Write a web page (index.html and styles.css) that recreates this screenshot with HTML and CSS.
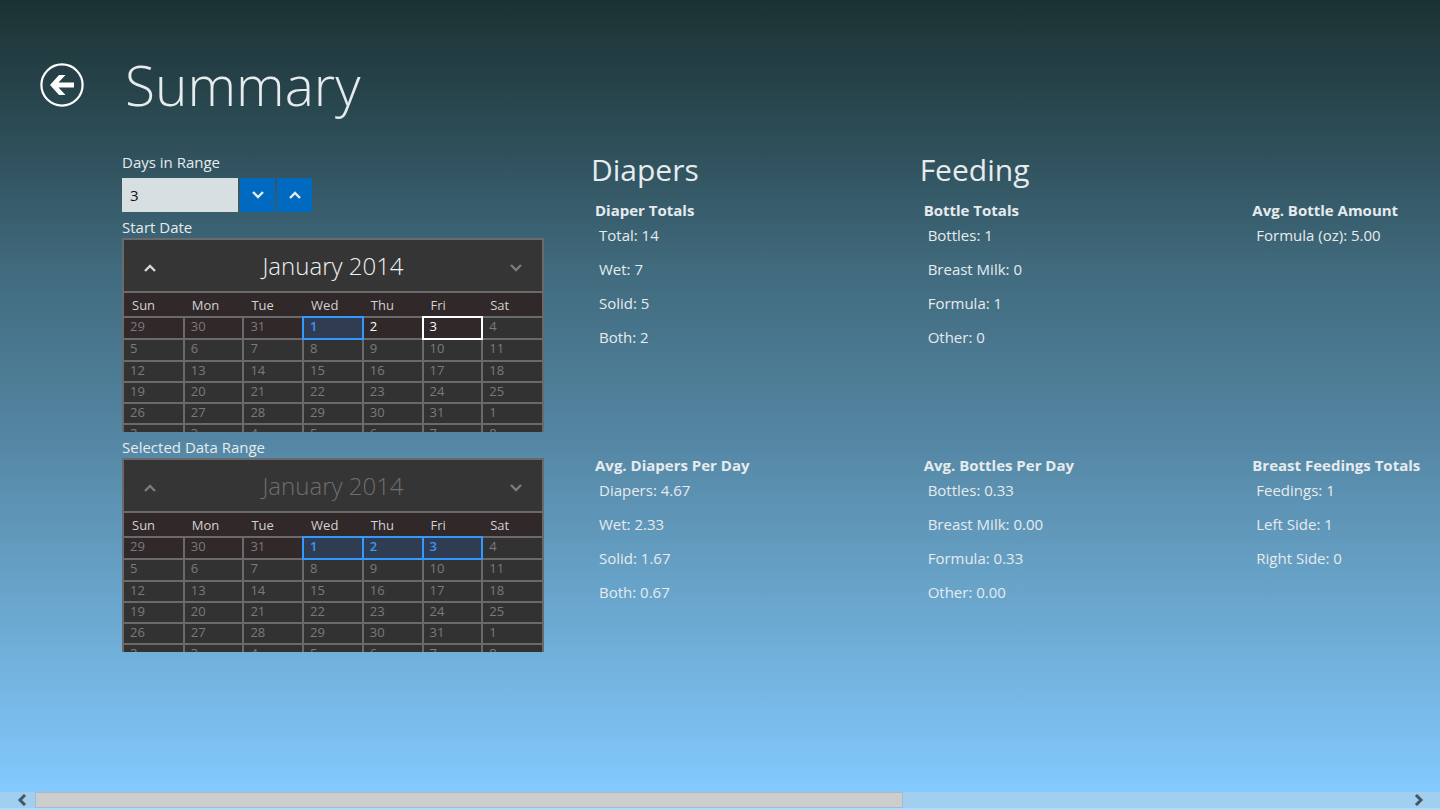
FILE: index.html
```
<!DOCTYPE html>
<html lang="en">
<head>
    <meta charset="UTF-8">
    <meta name="viewport" content="width=device-width, initial-scale=1.0">
    <title>Summary</title>
    <link rel="stylesheet" href="styles.css">
</head>
<body>
    <header class="page-header">
        <button class="back" type="button" aria-label="Back">
            <svg width="44" height="44" viewBox="0 0 44 44">
                <circle cx="22" cy="22" r="20.6" fill="none" stroke="#fff" stroke-width="2.2"/>
                <path d="M10 22 L19 12 H25.5 L18.5 19.4 H34 V24.6 H18.5 L25.5 32 H19 Z" fill="#fff"/>
            </svg>
        </button>
        <h1>Summary</h1>
    </header>

    <main class="content">
        <section class="filters">
            <label for="days">Days in Range</label>
            <div class="stepper">
                <input id="days" type="text" value="3">
                <button type="button" aria-label="Decrease">
                    <svg width="14" height="10" viewBox="0 0 14 10"><path d="M2 2 L7 7 L12 2"/></svg>
                </button>
                <button type="button" aria-label="Increase">
                    <svg width="14" height="10" viewBox="0 0 14 10"><path d="M2 8 L7 3 L12 8"/></svg>
                </button>
            </div>

            <h3 class="label">Start Date</h3>
            <div class="calendar">
                <div class="calendar-head">
                    <button type="button" aria-label="Previous month">
                        <svg width="14" height="10" viewBox="0 0 14 10"><path d="M2 8 L7 3 L12 8"/></svg>
                    </button>
                    <span class="month">January 2014</span>
                    <button type="button" aria-label="Next month" disabled>
                        <svg width="14" height="10" viewBox="0 0 14 10"><path d="M2 2 L7 7 L12 2"/></svg>
                    </button>
                </div>
                <table>
                    <thead>
                        <tr><th>Sun</th><th>Mon</th><th>Tue</th><th>Wed</th><th>Thu</th><th>Fri</th><th>Sat</th></tr>
                    </thead>
                    <tbody>
                        <tr>
                            <td class="past"><button type="button" disabled>29</button></td>
                            <td class="past"><button type="button" disabled>30</button></td>
                            <td class="past"><button type="button" disabled>31</button></td>
                            <td class="selected"><button type="button">1</button></td>
                            <td class="open"><button type="button">2</button></td>
                            <td class="open today"><button type="button">3</button></td>
                            <td><button type="button" disabled>4</button></td>
                        </tr>
                        <tr>
                            <td><button type="button" disabled>5</button></td>
                            <td><button type="button" disabled>6</button></td>
                            <td><button type="button" disabled>7</button></td>
                            <td><button type="button" disabled>8</button></td>
                            <td><button type="button" disabled>9</button></td>
                            <td><button type="button" disabled>10</button></td>
                            <td><button type="button" disabled>11</button></td>
                        </tr>
                        <tr>
                            <td><button type="button" disabled>12</button></td>
                            <td><button type="button" disabled>13</button></td>
                            <td><button type="button" disabled>14</button></td>
                            <td><button type="button" disabled>15</button></td>
                            <td><button type="button" disabled>16</button></td>
                            <td><button type="button" disabled>17</button></td>
                            <td><button type="button" disabled>18</button></td>
                        </tr>
                        <tr>
                            <td><button type="button" disabled>19</button></td>
                            <td><button type="button" disabled>20</button></td>
                            <td><button type="button" disabled>21</button></td>
                            <td><button type="button" disabled>22</button></td>
                            <td><button type="button" disabled>23</button></td>
                            <td><button type="button" disabled>24</button></td>
                            <td><button type="button" disabled>25</button></td>
                        </tr>
                        <tr>
                            <td><button type="button" disabled>26</button></td>
                            <td><button type="button" disabled>27</button></td>
                            <td><button type="button" disabled>28</button></td>
                            <td><button type="button" disabled>29</button></td>
                            <td><button type="button" disabled>30</button></td>
                            <td><button type="button" disabled>31</button></td>
                            <td><button type="button" disabled>1</button></td>
                        </tr>
                        <tr>
                            <td><button type="button" disabled>2</button></td>
                            <td><button type="button" disabled>3</button></td>
                            <td><button type="button" disabled>4</button></td>
                            <td><button type="button" disabled>5</button></td>
                            <td><button type="button" disabled>6</button></td>
                            <td><button type="button" disabled>7</button></td>
                            <td><button type="button" disabled>8</button></td>
                        </tr>
                    </tbody>
                </table>
            </div>

            <h3 class="label">Selected Data Range</h3>
            <div class="calendar readonly">
                <div class="calendar-head">
                    <button type="button" aria-label="Previous month" disabled>
                        <svg width="14" height="10" viewBox="0 0 14 10"><path d="M2 8 L7 3 L12 8"/></svg>
                    </button>
                    <span class="month">January 2014</span>
                    <button type="button" aria-label="Next month" disabled>
                        <svg width="14" height="10" viewBox="0 0 14 10"><path d="M2 2 L7 7 L12 2"/></svg>
                    </button>
                </div>
                <table>
                    <thead>
                        <tr><th>Sun</th><th>Mon</th><th>Tue</th><th>Wed</th><th>Thu</th><th>Fri</th><th>Sat</th></tr>
                    </thead>
                    <tbody>
                        <tr>
                            <td class="past"><button type="button" disabled>29</button></td>
                            <td class="past"><button type="button" disabled>30</button></td>
                            <td class="past"><button type="button" disabled>31</button></td>
                            <td class="selected"><button type="button">1</button></td>
                            <td class="selected"><button type="button">2</button></td>
                            <td class="selected"><button type="button">3</button></td>
                            <td><button type="button" disabled>4</button></td>
                        </tr>
                        <tr>
                            <td><button type="button" disabled>5</button></td>
                            <td><button type="button" disabled>6</button></td>
                            <td><button type="button" disabled>7</button></td>
                            <td><button type="button" disabled>8</button></td>
                            <td><button type="button" disabled>9</button></td>
                            <td><button type="button" disabled>10</button></td>
                            <td><button type="button" disabled>11</button></td>
                        </tr>
                        <tr>
                            <td><button type="button" disabled>12</button></td>
                            <td><button type="button" disabled>13</button></td>
                            <td><button type="button" disabled>14</button></td>
                            <td><button type="button" disabled>15</button></td>
                            <td><button type="button" disabled>16</button></td>
                            <td><button type="button" disabled>17</button></td>
                            <td><button type="button" disabled>18</button></td>
                        </tr>
                        <tr>
                            <td><button type="button" disabled>19</button></td>
                            <td><button type="button" disabled>20</button></td>
                            <td><button type="button" disabled>21</button></td>
                            <td><button type="button" disabled>22</button></td>
                            <td><button type="button" disabled>23</button></td>
                            <td><button type="button" disabled>24</button></td>
                            <td><button type="button" disabled>25</button></td>
                        </tr>
                        <tr>
                            <td><button type="button" disabled>26</button></td>
                            <td><button type="button" disabled>27</button></td>
                            <td><button type="button" disabled>28</button></td>
                            <td><button type="button" disabled>29</button></td>
                            <td><button type="button" disabled>30</button></td>
                            <td><button type="button" disabled>31</button></td>
                            <td><button type="button" disabled>1</button></td>
                        </tr>
                        <tr>
                            <td><button type="button" disabled>2</button></td>
                            <td><button type="button" disabled>3</button></td>
                            <td><button type="button" disabled>4</button></td>
                            <td><button type="button" disabled>5</button></td>
                            <td><button type="button" disabled>6</button></td>
                            <td><button type="button" disabled>7</button></td>
                            <td><button type="button" disabled>8</button></td>
                        </tr>
                    </tbody>
                </table>
            </div>
        </section>

        <section class="stats">
            <h2>Diapers</h2>
            <h2 class="wide">Feeding</h2>

            <div class="group">
                <h3>Diaper Totals</h3>
                <p>Total: 14</p>
                <p>Wet: 7</p>
                <p>Solid: 5</p>
                <p>Both: 2</p>
            </div>
            <div class="group">
                <h3>Bottle Totals</h3>
                <p>Bottles: 1</p>
                <p>Breast Milk: 0</p>
                <p>Formula: 1</p>
                <p>Other: 0</p>
            </div>
            <div class="group">
                <h3>Avg. Bottle Amount</h3>
                <p>Formula (oz): 5.00</p>
            </div>

            <div class="group">
                <h3>Avg. Diapers Per Day</h3>
                <p>Diapers: 4.67</p>
                <p>Wet: 2.33</p>
                <p>Solid: 1.67</p>
                <p>Both: 0.67</p>
            </div>
            <div class="group">
                <h3>Avg. Bottles Per Day</h3>
                <p>Bottles: 0.33</p>
                <p>Breast Milk: 0.00</p>
                <p>Formula: 0.33</p>
                <p>Other: 0.00</p>
            </div>
            <div class="group">
                <h3>Breast Feedings Totals</h3>
                <p>Feedings: 1</p>
                <p>Left Side: 1</p>
                <p>Right Side: 0</p>
            </div>
        </section>
    </main>

    <footer class="scrollbar">
        <button type="button" aria-label="Scroll left">
            <svg width="12" height="12" viewBox="0 0 12 12"><path d="M9 1 L4 6 L9 11"/></svg>
        </button>
        <div class="track"><div class="thumb"></div></div>
        <button type="button" aria-label="Scroll right">
            <svg width="12" height="12" viewBox="0 0 12 12"><path d="M3 1 L8 6 L3 11"/></svg>
        </button>
    </footer>
</body>
</html>
```
FILE: styles.css
```
* {
    box-sizing: border-box;
}
body {
    display: flex;
    flex-direction: column;
    min-height: 100vh;
    margin: 0;
    font-family: "Open Sans", "Noto Sans", sans-serif;
    font-size: 15px;
    line-height: 20px;
    color: #e6ebed;
    background: linear-gradient(#1b3233 0%, #2d4d57 17%, #406a7d 33%, #5486a3 54%, #71b0da 81%, #84caff 98%);
}
h1, h2, h3, p {
    margin: 0;
    font-weight: 400;
}
button {
    display: flex;
    align-items: center;
    justify-content: center;
    margin: 0;
    padding: 0;
    border: 0;
    background: none;
    font: inherit;
    color: inherit;
}
svg {
    display: block;
}
.page-header {
    display: flex;
    align-items: center;
    gap: 41px;
    padding: 45px 40px 25px;
}
h1 {
    font-size: 55px;
    font-weight: 300;
    line-height: 80px;
}
.content {
    flex: 1;
    display: grid;
    grid-template-columns: 422px 1fr;
    gap: 47px;
    padding: 2px 0 20px 122px;
}
.filters label, .label {
    display: block;
    font-size: 15px;
    line-height: 20px;
}
.label {
    padding: 5px 0 1px;
}
.stepper {
    display: flex;
    gap: 2px;
    padding-top: 6px;
}
.stepper input {
    width: 116px;
    height: 34px;
    padding: 0 8px;
    border: 0;
    background: #d8dfe1;
    font: inherit;
    color: #111;
}
.stepper button {
    width: 35px;
    background: #0069c0;
}
.stepper path, .calendar path {
    fill: none;
    stroke: currentColor;
    stroke-width: 2.4;
}
/* the last week is cut off by the calendar's fixed height */
.calendar {
    height: 194px;
    overflow: hidden;
    border: 2px solid #6a6a6a;
    border-bottom: 0;
    background: #353535;
}
.calendar-head {
    display: flex;
    align-items: center;
    justify-content: space-between;
    height: 51px;
    padding: 0 19px;
}
.calendar-head button {
    padding-top: 4px;
    color: #d8d8d8;
}
.calendar-head button:disabled {
    color: #7c7c7c;
}
.month {
    font-size: 24px;
    font-weight: 300;
    color: #f0f0f0;
}
.readonly .month {
    color: #6e6e6e;
}
.calendar table {
    width: 100%;
    table-layout: fixed;
    border-collapse: collapse;
    font-size: 13px;
    line-height: 18px;
}
.calendar th {
    height: 25px;
    padding: 0 0 0 8px;
    border-top: 2px solid #6a6a6a;
    background: #302829;
    font-weight: 400;
    text-align: left;
    color: #d2d2d2;
}
.calendar td {
    height: 22px;
    padding: 0;
    border: 2px solid #6a6a6a;
    background: #323232;
    color: #7a7a7a;
}
.calendar tr > :first-child {
    border-left: 0;
}
.calendar tr > :last-child {
    border-right: 0;
}
.calendar td button {
    justify-content: flex-start;
    width: 100%;
    height: 20px;
    padding: 0 0 4px 6px;
    line-height: 16px;
}
.calendar tr:nth-child(n+3) td {
    height: 21px;
}
.calendar tr:nth-child(n+3) button {
    height: 19px;
}
.calendar .past {
    background: #302829;
}
.calendar .open {
    background: #302829;
    color: #fff;
}
.calendar .selected button, .calendar .today button {
    outline: 2px solid #fff;
}
.calendar .selected {
    background: #303c52;
    color: #3399ff;
    font-weight: 600;
}
.calendar .selected button {
    outline-color: #3399ff;
}
.stats {
    display: grid;
    grid-template-columns: minmax(0, 12fr) minmax(0, 12fr) minmax(0, 7fr);
    grid-template-rows: 47px 255px auto;
    align-content: start;
}
h2 {
    font-size: 30px;
    line-height: 36px;
}
.wide {
    grid-column: span 2;
}
.group {
    padding-left: 4px;
    white-space: nowrap;
}
.group h3 {
    font-size: 15px;
    font-weight: 700;
    line-height: 22px;
}
.group p {
    padding-left: 4px;
    line-height: 28px;
    margin-bottom: 6px;
}
.scrollbar {
    display: flex;
    height: 18px;
    border-bottom: 2px solid #b0dcfa;
    background: #a0cfef;
}
.scrollbar button {
    width: 35px;
    padding-left: 8px;
}
.scrollbar button:last-child {
    width: 28px;
    padding: 0 14px 0 0;
}
.scrollbar path {
    fill: none;
    stroke: #455664;
    stroke-width: 3;
}
.track {
    flex: 1;
}
.thumb {
    width: 63%;
    height: 100%;
    border: 1px solid #a9bac6;
    background: #cdcdcd;
}
```
